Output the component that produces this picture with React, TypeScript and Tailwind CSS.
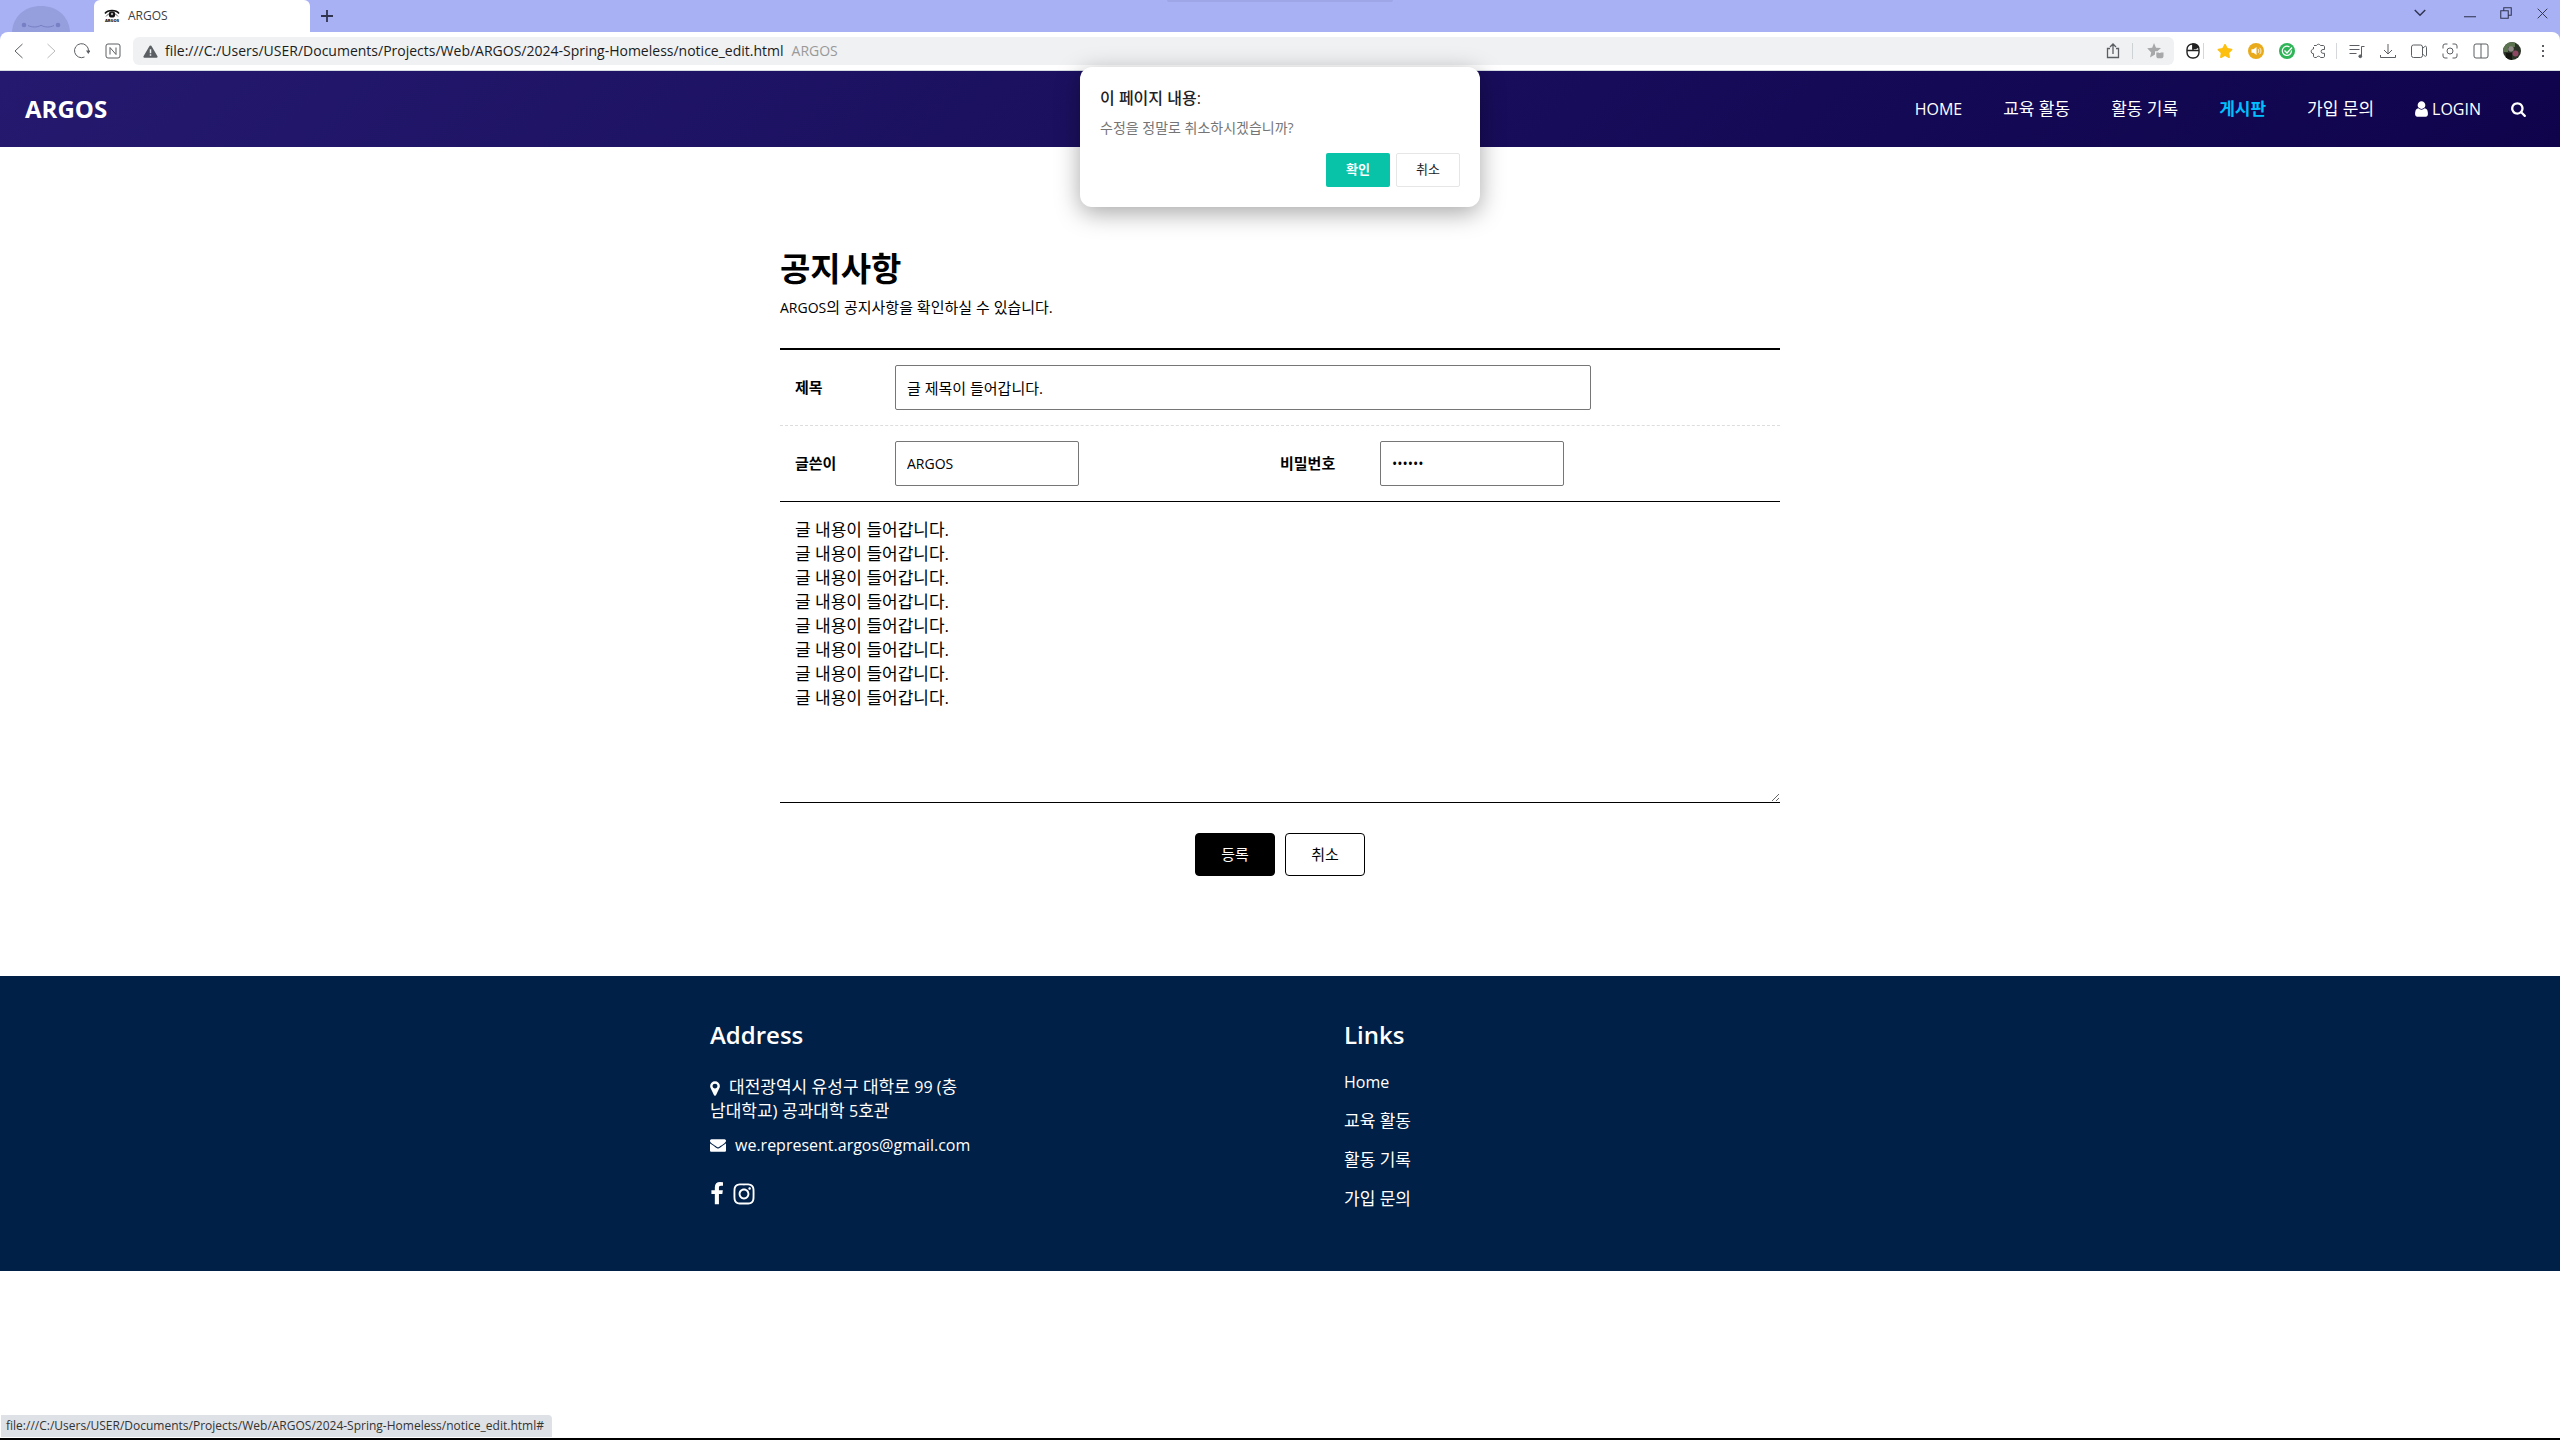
import type { ReactNode } from "react";
import { FaInstagram, FaStar } from "react-icons/fa";

const PAGE_URL =
  "file:///C:/Users/USER/Documents/Projects/Web/ARGOS/2024-Spring-Homeless/notice_edit.html";

const BODY_TEXT = Array(8).fill("글 내용이 들어갑니다.").join("\n");

function Glyph({ d, box, className }: { d: string; box: string; className: string }) {
  return (
    <svg viewBox={box} className={className} fill="currentColor" aria-hidden="true">
      <path d={d} />
    </svg>
  );
}

const USER =
  "M1280 1399q0 109-62.5 187t-150.5 78h-854q-88 0-150.5-78t-62.5-187q0-85 8.5-160.5t31.5-152 58.5-131 94-89 134.5-34.5q131 128 313 128t313-128q76 0 134.5 34.5t94 89 58.5 131 31.5 152 8.5 160.5zm-256-887q0 159-112.5 271.5t-271.5 112.5-271.5-112.5-112.5-271.5 112.5-271.5 271.5-112.5 271.5 112.5 112.5 271.5z";
const SEARCH =
  "M1152 832q0-185-131.5-316.5t-316.5-131.5-316.5 131.5-131.5 316.5 131.5 316.5 316.5 131.5 316.5-131.5 131.5-316.5zm512 832q0 52-38 90t-90 38q-54 0-90-38l-343-342q-179 124-399 124-143 0-273.5-55.5t-225-150-150-225-55.5-273.5 55.5-273.5 150-225 225-150 273.5-55.5 273.5 55.5 225 150 150 225 55.5 273.5q0 220-124 399l343 343q37 37 37 90z";
const MARKER =
  "M768 640q0-106-75-181t-181-75-181 75-75 181 75 181 181 75 181-75 75-181zm256 0q0 109-33 179l-364 774q-16 33-47.5 52t-67.5 19-67.5-19-46.5-52l-365-774q-33-70-33-179 0-212 150-362t362-150 362 150 150 362z";
const ENVELOPE =
  "M1792 710v794q0 66-47 113t-113 47h-1472q-66 0-113-47t-47-113v-794q44 49 101 87 362 246 497 345 57 42 92.5 65.5t94.5 48 110 24.5h2q51 0 110-24.5t94.5-48 92.5-65.5q170-123 498-345 57-39 100-87zm0-294q0 79-49 151t-122 123q-376 261-468 325-10 7-42.5 31t-54 38.5-52 32.5-57.5 27-50 9h-2q-23 0-50-9t-57.5-27-52-32.5-54-38.5-42.5-31q-91-64-262-182.5t-205-142.5q-62-42-117-115.5t-55-136.5q0-78 41.5-130t118.5-52h1472q65 0 112.5 47t47.5 113z";
const FACEBOOK =
  "M959 12v264h-157q-86 0-116 36t-30 108v189h293l-39 296h-254v759h-306v-759h-255v-296h255v-218q0-186 104-288.5t277-102.5q147 0 228 12z";

function Line({ children, className = "size-4", stroke = 1 }: { children: ReactNode; className?: string; stroke?: number }) {
  return (
    <svg
      viewBox="0 0 16 16"
      className={className}
      fill="none"
      stroke="currentColor"
      strokeWidth={stroke}
      aria-hidden="true"
    >
      {children}
    </svg>
  );
}

function ToolButton({ label, children }: { label: string; children: ReactNode }) {
  return (
    <button type="button" aria-label={label} className="flex h-7 w-[31px] items-center justify-center">
      {children}
    </button>
  );
}

function Mascot() {
  return (
    <svg viewBox="0 0 58 26" className="h-[26px] w-[58px]" aria-hidden="true">
      <path d="M0 26C1 10 13 0 29 0s28 10 29 26z" fill="#969fdd" />
      <circle cx="12" cy="19" r="2.3" fill="#7780c4" />
      <circle cx="46" cy="19" r="2.3" fill="#7780c4" />
      <path d="M16 19.500c4 2 9 2 13-.2 4 2.200 9 2.200 13 .2" fill="none" stroke="#7780c4" strokeWidth="1" />
    </svg>
  );
}

function Favicon() {
  return (
    <svg viewBox="0 0 16 16" className="size-4" aria-hidden="true">
      <path d="M1 5.500C4 1.500 12 1.500 15 5.500" fill="none" stroke="#111" strokeWidth="1.600" />
      <path d="M2 8.500C4 4.500 12 4.500 14 8.500" fill="none" stroke="#555" strokeWidth=".8" />
      <circle cx="8" cy="6.400" r="3.200" fill="#111" />
      <circle cx="8" cy="6" r="1.200" fill="#aaa" />
      <text x="8" y="14" textAnchor="middle" fontSize="4" fontWeight="900" fontFamily="Open Sans" fill="#111">
        ARGOS
      </text>
    </svg>
  );
}

function TabStrip() {
  return (
    <div className="flex h-8 items-end bg-[#a9b1f5] text-[#30344f]">
      <div className="flex w-[94px] justify-center pr-3">
        <Mascot />
      </div>
      <div className="flex h-full w-[216px] items-center gap-2 rounded-t-md bg-white pl-[10px]">
        <Favicon />
        <span className="text-xs text-[#3c4043]">ARGOS</span>
      </div>
      <button type="button" aria-label="새 탭" className="flex h-8 w-[34px] items-center justify-center">
        <svg viewBox="0 0 12 12" className="size-3" stroke="currentColor" strokeWidth="1.800" aria-hidden="true">
          <path d="M6 0v12M0 6h12" />
        </svg>
      </button>
      <div className="mr-3 ml-auto flex h-[26px] items-center self-start">
        <button type="button" aria-label="탭 검색" className="flex w-10 justify-center">
          <Line className="size-3" stroke={2}>
            <path d="M1 4l7 7 7-7" />
          </Line>
        </button>
      </div>
      <div className="flex h-[26px] items-center self-start">
        <button type="button" aria-label="최소화" className="flex w-9 justify-center">
          <Line className="size-3">
            <path d="M0 13h16" strokeWidth="1.400" />
          </Line>
        </button>
        <button type="button" aria-label="이전 크기로 복원" className="flex w-9 justify-center">
          <Line className="size-3" stroke={1.4}>
            <path d="M1 5h10v10H1zM5 5V1h10v10h-4" />
          </Line>
        </button>
        <button type="button" aria-label="닫기" className="flex w-9 justify-center">
          <Line className="size-[11px]" stroke={1.4}>
            <path d="M1 1l14 14M15 1L1 15" />
          </Line>
        </button>
      </div>
    </div>
  );
}

function Toolbar() {
  return (
    <div className="bg-[#a9b1f5]">
      <div className="flex h-[39px] items-center rounded-t-lg border-b border-[#d5dde2] bg-white pr-[2px] pl-[3px] text-[#5b5f63]">
        <div className="flex items-center">
          <ToolButton label="뒤로">
            <Line>
              <path d="M11.500 1L4 8l7.500 7" />
            </Line>
          </ToolButton>
          <ToolButton label="앞으로">
            <Line className="ml-[2px] size-4 text-[#bbb]">
              <path d="M4.500 1L12 8l-7.500 7" />
            </Line>
          </ToolButton>
          <ToolButton label="새로고침">
            <Line className="ml-[2px] size-4">
              <path d="M10.500 14A7 7 0 1 1 14.500 8" />
              <path d="M12 7.500h4.500L14.300 11z" fill="currentColor" stroke="none" />
            </Line>
          </ToolButton>
          <ToolButton label="네이버">
            <Line className="ml-[2px] size-4">
              <rect x="1" y="1" width="14" height="14" rx="2" />
              <path d="M5 11.500v-7l6 7v-7" />
            </Line>
          </ToolButton>
        </div>
        <div className="ml-[6px] flex h-7 flex-1 items-center rounded-md bg-[#eff1f3] pl-[10px]">
          <svg viewBox="0 0 16 14" className="h-[13px] w-[15px]" aria-hidden="true">
            <path d="M8 0.500c.7 0 1 .3 1.400 1L15.500 12c.4.900 0 1.600-.9 1.600H1.400c-.9 0-1.300-.7-.9-1.600L6.600 1.500C7 .8 7.300.5 8 .5z" fill="#5b5f63" />
            <path d="M7.200 4.500h1.600v4.300H7.200zM7.200 10h1.600v1.600H7.200z" fill="#eff1f3" />
          </svg>
          <span className="ml-[7px] text-sm text-[#1c1c1c]">{PAGE_URL}</span>
          <span className="ml-2 text-sm text-[#999]">ARGOS</span>
          <div className="ml-auto flex items-center">
            <ToolButton label="공유">
              <Line stroke={1.3}>
                <path d="M5 5.500H2.500v9h11v-9H11M8 11V1.500M5 4l3-3 3 3" />
              </Line>
            </ToolButton>
            <span className="mx-1 h-4 w-px bg-[#cfd2d5]" />
            <button type="button" aria-label="즐겨찾기" className="ml-[10px] flex h-7 w-[27px] items-center">
              <svg viewBox="0 0 17 16" className="h-4 w-[17px]" fill="#a6a8aa" aria-hidden="true">
                <path d="M7 0l2 4.700 5 .4-3.600 3.200H8v3.200L3 14.500l1.200-5L.2 5.200l5-.5z" />
                <path d="M9.300 9.500h1.800c.7 0 1 .6 1.600.6s.9-.6 1.600-.6h2.200V13c0 1.500-1 2.300-2.300 2.300h-2.600c-1.400 0-2.300-.8-2.300-2.300z" />
              </svg>
            </button>
          </div>
        </div>
        <div className="flex items-center">
          <button type="button" aria-label="마우스 제스처" className="ml-3 flex h-7 w-4 items-center">
            <svg viewBox="0 0 14 16" className="h-4 w-[14px]" fill="none" stroke="#222" strokeWidth="1.400" aria-hidden="true">
              <rect x="1" y="1" width="12" height="14" rx="5.500" />
              <path d="M1 7.500h12M7 1v6" />
              <path d="M7 1c3 0 4.500 1 5.500 3L9.500 5.500H7z" fill="#222" />
            </svg>
          </button>
          <span className="mr-[5px] ml-px h-4 w-px bg-[#d5d8da]" />
          <ToolButton label="즐겨찾기 목록">
            <FaStar className="size-4 text-[#fdbf10]" />
          </ToolButton>
          <ToolButton label="소리">
            <svg viewBox="0 0 16 16" className="size-4" aria-hidden="true">
              <circle cx="8" cy="8" r="8" fill="#e9ab1c" />
              <path d="M3.500 6.300h2L8.500 4v8L5.500 9.700h-2z" fill="#fff" />
              <path d="M10 6c1 1 1 3 0 4M11.700 4.800c1.700 1.700 1.700 4.700 0 6.400" fill="none" stroke="#fff" strokeWidth=".8" />
            </svg>
          </ToolButton>
          <ToolButton label="보안">
            <svg viewBox="0 0 16 16" className="size-4" fill="none" stroke="#fff" aria-hidden="true">
              <circle cx="8" cy="8" r="8" fill="#2fb457" stroke="none" />
              <path d="M12.500 7.500A4.600 4.600 0 1 1 10.500 4" strokeWidth="1.200" />
              <path d="M5.500 7.500L8 10l5-5.500" strokeWidth="1.400" />
            </svg>
          </ToolButton>
          <ToolButton label="확장 프로그램">
            <Line>
              <path d="M4 2.500h2.500a2.200 2.200 0 0 1 4 0H13c1 0 1.500.5 1.500 1.500v2.500H13a1.900 1.900 0 0 0 0 3.800h1.500V13c0 1-.5 1.500-1.500 1.500h-2.500a2.200 2.200 0 0 0-4 0H5c-1 0-1.500-.5-1.500-1.500v-2.300a2.300 2.300 0 0 1-1-4.400l1-.3V4" />
            </Line>
          </ToolButton>
          <span className="mr-1 ml-[3px] h-4 w-px bg-[#d5d8da]" />
          <ToolButton label="재생 목록">
            <Line>
              <path d="M.5 2.500h10M.5 6.500h10M.5 10.500h7M12.500 13V3.500h3" />
              <circle cx="11.300" cy="13.300" r="1.400" fill="currentColor" />
            </Line>
          </ToolButton>
          <ToolButton label="다운로드">
            <Line>
              <path d="M8 1v9.500M4 7l4 4 4-4M.5 12v2.500h15V12" />
            </Line>
          </ToolButton>
          <ToolButton label="화면 녹화">
            <Line>
              <rect x=".5" y="2" width="11" height="12.500" rx="2" />
              <path d="M11.500 5.500l2.300-2c.8-.6 1.700-.2 1.700.8v8c0 1-.9 1.300-1.700.7l-2.300-2" />
            </Line>
          </ToolButton>
          <ToolButton label="캡처">
            <Line>
              <path d="M5.500 1H3a2 2 0 0 0-2 2v2.500M10.500 1H13a2 2 0 0 1 2 2v2.500M15 10.500V13a2 2 0 0 1-2 2h-2.500M5.500 15H3a2 2 0 0 1-2-2v-2.500" />
              <circle cx="8" cy="8" r="3" />
            </Line>
          </ToolButton>
          <ToolButton label="분할 화면">
            <Line>
              <rect x="1" y="1" width="14" height="14" rx="2" />
              <path d="M8 1v14" />
            </Line>
          </ToolButton>
          <ToolButton label="프로필">
            <svg viewBox="0 0 18 18" className="size-[18px] rounded-full" aria-hidden="true">
              <rect width="18" height="18" fill="#2b3327" />
              <path d="M0 0h12v5H5v5H0z" fill="#5c7350" />
              <circle cx="8" cy="7" r="2.800" fill="#8f8a86" />
              <circle cx="12.500" cy="11.500" r="3" fill="#8d4763" />
              <path d="M3 11h6v7H3z" fill="#14160f" />
            </svg>
          </ToolButton>
          <ToolButton label="메뉴">
            <Line>
              <path d="M7 2h2v2H7zM7 7h2v2H7zM7 12h2v2H7z" fill="currentColor" stroke="none" />
            </Line>
          </ToolButton>
        </div>
      </div>
    </div>
  );
}

function SiteNav() {
  return (
    <header className="flex h-[76px] items-center justify-between bg-linear-135 from-[#24196e] to-[#0f044c] pr-[34px] pl-[25px] text-white">
      <a href="#" className="text-2xl font-bold">
        ARGOS
      </a>
      <nav className="flex items-center gap-[41px] text-[17px]">
        <a href="#" className="text-base">HOME</a>
        <a href="#">교육 활동</a>
        <a href="#">활동 기록</a>
        <a href="#" className="font-bold text-[#00bfff]">게시판</a>
        <a href="#">가입 문의</a>
        <div className="flex items-center gap-[30px]">
          <a href="#" className="flex items-center gap-1 text-base">
            <Glyph d={USER} box="0 0 1280 1792" className="h-[18px] w-[13px]" />
            LOGIN
          </a>
          <button type="button" aria-label="검색">
            <Glyph d={SEARCH} box="0 0 1664 1792" className="h-4 w-[15px]" />
          </button>
        </div>
      </nav>
    </header>
  );
}

const FIELD = "h-[45px] rounded-xs border border-[#767676] bg-white px-[11px] text-black outline-none";

function NoticeForm() {
  return (
    <main className="mx-auto w-full max-w-[1000px] pt-[98px] pb-[100px] text-black">
      <h1 className="text-[33px] leading-[48px] font-bold">공지사항</h1>
      <p className="mt-[2px] text-[15px] leading-6">
        <span className="text-sm">ARGOS</span>의 공지사항을 확인하실 수 있습니다.
      </p>
      <form className="mt-[29px]">
        <div className="border-t-2 border-black">
          <div className="flex items-center border-b border-dashed border-[#ddd] py-[15px] pl-[15px]">
            <label htmlFor="title" className="w-[100px] text-[15px] font-bold">제목</label>
            <input id="title" type="text" defaultValue="글 제목이 들어갑니다." className={`${FIELD} w-[696px] text-[15px]`} />
          </div>
          <div className="grid grid-cols-[485px_1fr] border-b border-black py-[15px] pl-[15px]">
            <div className="flex items-center">
              <label htmlFor="writer" className="w-[100px] text-[15px] font-bold">글쓴이</label>
              <input id="writer" type="text" defaultValue="ARGOS" className={`${FIELD} w-[184px] text-sm`} />
            </div>
            <div className="flex items-center">
              <label htmlFor="pw" className="w-[100px] text-[15px] font-bold">비밀번호</label>
              <input id="pw" type="password" defaultValue="123456" className={`${FIELD} w-[184px] text-sm`} />
            </div>
          </div>
        </div>
        <textarea
          aria-label="내용"
          defaultValue={BODY_TEXT}
          className="block h-[301px] w-full border-b border-black px-[15px] pt-4 text-[17px] leading-6 outline-none"
        />
        <div className="mt-[30px] flex justify-center gap-[10px] text-[15px]">
          <button type="button" className="h-[43px] w-20 rounded-sm border border-black bg-black text-white">등록</button>
          <button type="button" className="h-[43px] w-20 rounded-sm border border-black bg-white text-black">취소</button>
        </div>
      </form>
    </main>
  );
}

function Footer() {
  return (
    <footer className="bg-[#002047] pt-[43px] pb-[60px] text-white">
      <div className="mx-auto grid max-w-[1140px] grid-cols-[634px_1fr]">
        <section>
          <h2 className="text-2xl leading-8 font-semibold">Address</h2>
          <address className="mt-6 not-italic">
            <p className="text-[17px] leading-6">
              <Glyph d={MARKER} box="0 0 1024 1792" className="mr-[9px] inline-block h-[17px] w-[10px]" />
              대전광역시 유성구 대학로 <span className="text-base">99 (</span>충
              <br />
              남대학교) 공과대학 <span className="text-base">5</span>호관
            </p>
            <a href="mailto:we.represent.argos@gmail.com" className="mt-[10px] flex h-6 items-center gap-[9px]">
              <Glyph d={ENVELOPE} box="0 0 1792 1792" className="size-4" />
              we.represent.argos@gmail.com
            </a>
          </address>
          <div className="mt-[25px] flex items-center gap-2">
            <a href="#" aria-label="Facebook">
              <Glyph d={FACEBOOK} box="0 0 1024 1792" className="h-6 w-[14px]" />
            </a>
            <a href="#" aria-label="Instagram">
              <FaInstagram className="size-6" />
            </a>
          </div>
        </section>
        <section>
          <h2 className="text-2xl leading-8 font-semibold">Links</h2>
          <ul className="mt-[19px] flex flex-col gap-[15px] text-[17px] leading-6">
            <li><a href="#" className="block text-base">Home</a></li>
            <li><a href="#">교육 활동</a></li>
            <li><a href="#">활동 기록</a></li>
            <li><a href="#">가입 문의</a></li>
          </ul>
        </section>
      </div>
    </footer>
  );
}

function ConfirmDialog() {
  return (
    <div
      role="alertdialog"
      aria-labelledby="dialog-title"
      className="absolute top-[67px] left-1/2 w-[400px] -translate-x-1/2 rounded-xl bg-white p-5 shadow-[0_6px_24px_rgba(0,0,0,0.35)]"
    >
      <h2 id="dialog-title" className="text-base leading-[22px] font-medium text-[#202124]">이 페이지 내용:</h2>
      <p className="mt-2 text-sm leading-[22px] text-[#757575]">수정을 정말로 취소하시겠습니까?</p>
      <div className="mt-[14px] flex justify-end gap-[6px] text-[13px]">
        <button type="button" className="h-[34px] w-16 rounded-xs bg-[#08c3a8] font-bold text-white">확인</button>
        <button type="button" className="h-[34px] w-16 rounded-xs border border-[#e6e6e6] bg-white text-[#1c1c1c]">취소</button>
      </div>
    </div>
  );
}

export default function App() {
  return (
    <div className="relative min-h-screen bg-white font-['Open_Sans','Noto_Sans_CJK_KR',sans-serif]">
      <div className="absolute top-0 left-1/2 h-[2px] w-[226px] -translate-x-1/2 rounded-b bg-[#9ea6e8]" />
      <TabStrip />
      <Toolbar />
      <SiteNav />
      <NoticeForm />
      <Footer />
      <ConfirmDialog />
      <div className="fixed bottom-0 left-0 w-full border-b-2 border-black">
        <div className="mb-px ml-px w-fit rounded-tr bg-[#dee1e6] py-px pr-2 pl-[5px] text-xs leading-5 text-[#333]">
          {PAGE_URL}#
        </div>
      </div>
    </div>
  );
}
